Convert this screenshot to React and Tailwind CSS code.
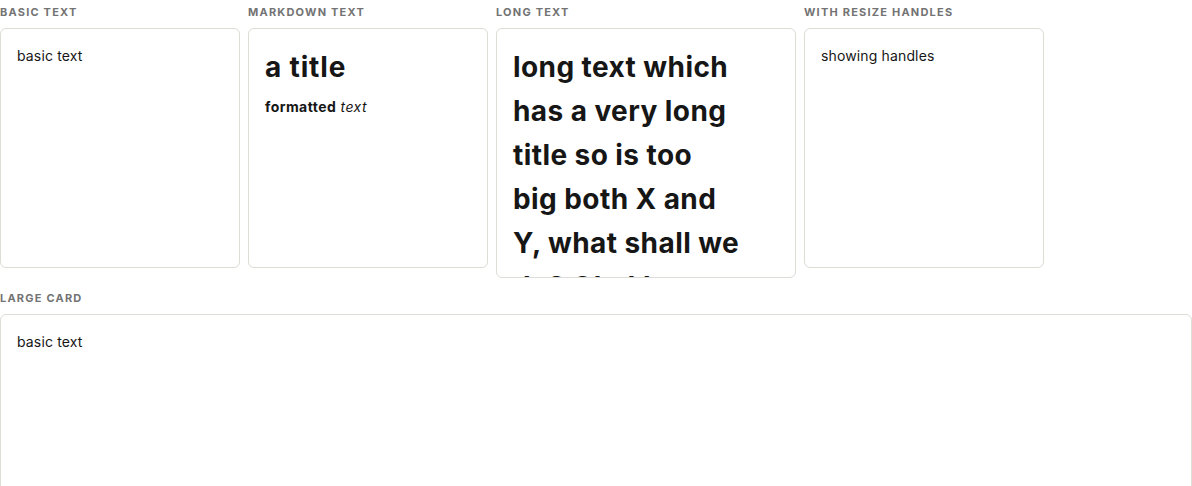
const font = { fontFamily: 'Inter, "Liberation Sans", sans-serif' }

const LONG_LINES = [
  'long text which',
  'has a very long',
  'title so is too',
  'big both X and',
  'Y, what shall we',
  'do? Oh, I know,',
  'let it overflow',
]

function Label({ children }) {
  return (
    <div className="h-4 mt-1 mb-2 text-[11px] leading-4 font-bold uppercase tracking-[0.11em] text-[#737373]">
      {children}
    </div>
  )
}

function Card({ className = '', children }) {
  return (
    <div className={`bg-white border border-[#dddcd6] rounded-md p-4 overflow-hidden ${className}`}>
      {children}
    </div>
  )
}

export default function App() {
  return (
    <div className="bg-white min-h-screen text-[#161616]" style={font}>
      <div className="flex gap-2 items-start">
        <div className="w-[240px]">
          <Label>basic text</Label>
          <Card className="h-[240px]">
            <p className="text-sm leading-[22px] tracking-[0.01em]">basic text</p>
          </Card>
        </div>
        <div className="w-[240px]">
          <Label>markdown text</Label>
          <Card className="h-[240px]">
            <h1 className="text-[28px] leading-[44px] font-bold tracking-[0.03em]">a title</h1>
            <p className="text-sm leading-[22px] mt-[7px] tracking-[0.03em]"><strong>formatted</strong> <em>text</em></p>
          </Card>
        </div>
        <div className="w-[300px]">
          <Label>long text</Label>
          <Card className="h-[250px]">
            <h1 className="text-[28px] leading-[44px] font-bold tracking-[0.015em] whitespace-nowrap">
              {LONG_LINES.map((l) => <span key={l} className="block">{l}</span>)}
            </h1>
          </Card>
        </div>
        <div className="w-[240px]">
          <Label>with resize handles</Label>
          <Card className="h-[240px]">
            <p className="text-sm leading-[22px] tracking-[0.01em]">showing handles</p>
          </Card>
        </div>
      </div>
      <div className="mt-3">
        <Label>large card</Label>
        <Card className="h-[240px]">
          <p className="text-sm leading-[22px] tracking-[0.01em]">basic text</p>
        </Card>
      </div>
    </div>
  )
}
